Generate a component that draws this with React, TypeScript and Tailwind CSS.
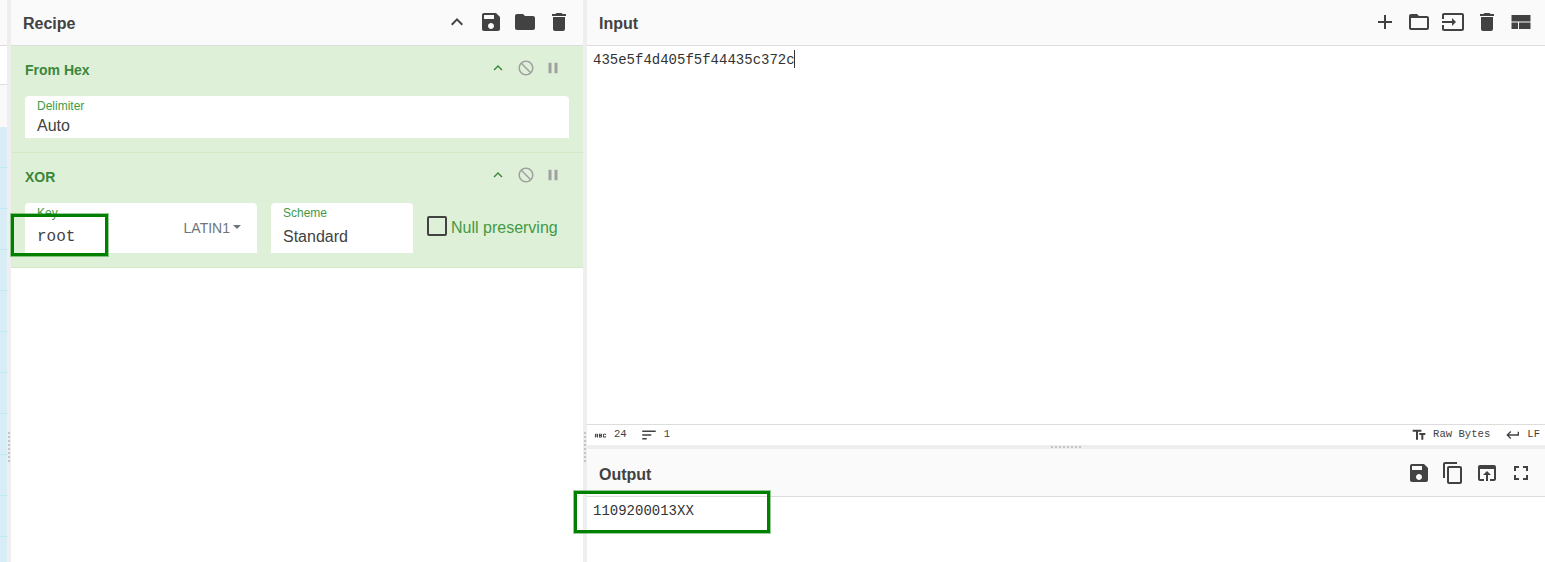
import type { ReactNode } from "react";

const icons = {
  up: "M7.41 15.41L12 10.83l4.59 4.58L18 14l-6-6-6 6z",
  save: "M17 3H5c-1.11 0-2 .9-2 2v14c0 1.1.89 2 2 2h14c1.1 0 2-.9 2-2V7l-4-4zm-5 16c-1.66 0-3-1.34-3-3s1.34-3 3-3 3 1.34 3 3-1.34 3-3 3zm3-10H5V5h10v4z",
  folder: "M10 4H4c-1.1 0-1.99.9-1.99 2L2 18c0 1.1.9 2 2 2h16c1.1 0 2-.9 2-2V8c0-1.1-.9-2-2-2h-8l-2-2z",
  trash: "M6 19c0 1.1.9 2 2 2h8c1.1 0 2-.9 2-2V7H6v12zM19 4h-3.5l-1-1h-5l-1 1H5v2h14V4z",
  block: "M12 2C6.48 2 2 6.48 2 12s4.48 10 10 10 10-4.48 10-10S17.52 2 12 2zM4 12c0-4.42 3.58-8 8-8 1.85 0 3.55.63 4.9 1.69L5.69 16.9C4.63 15.55 4 13.85 4 12zm8 8c-1.85 0-3.55-.63-4.9-1.69L18.31 7.1C19.37 8.45 20 10.15 20 12c0 4.42-3.58 8-8 8z",
  pause: "M6 19h4V5H6v14zm8-14v14h4V5h-4z",
  add: "M19 13h-6v6h-2v-6H5v-2h6V5h2v6h6v2z",
  folderOpen: "M20 6h-8l-2-2H4c-1.1 0-1.99.9-1.99 2L2 18c0 1.1.9 2 2 2h16c1.1 0 2-.9 2-2V8c0-1.1-.9-2-2-2zm0 12H4V8h16v10z",
  input: "M21 3.01H3c-1.1 0-2 .9-2 2V9h2V4.99h18v14.03H3V15H1v4.01c0 1.1.9 1.98 2 1.98h18c1.1 0 2-.88 2-1.98v-14c0-1.11-.9-2-2-2zM11 16l4-4-4-4v3H1v2h10v3z",
  layout: "M2.5 5h19v6.5h-19zM2.5 12.5H9V19H2.5zM10 12.5h11.5V19H10z",
  copy: "M16 1H4c-1.1 0-2 .9-2 2v14h2V3h12V1zm3 4H8c-1.1 0-2 .9-2 2v14c0 1.1.9 2 2 2h11c1.1 0 2-.9 2-2V7c0-1.1-.9-2-2-2zm0 16H8V7h11v14z",
  openBrowser: "M19 4H5c-1.11 0-2 .9-2 2v12c0 1.1.89 2 2 2h4v-2H5V8h14v10h-4v2h4c1.1 0 2-.9 2-2V6c0-1.1-.89-2-2-2zm-7 6l-4 4h3v6h2v-6h3l-4-4z",
  fullscreen: "M7 14H5v5h5v-2H7v-3zm-2-4h2V7h3V5H5v5zm12 7h-3v2h5v-5h-2v3zM14 5v2h3v3h2V5h-5z",
  textFields: "M2.5 4v3h5v12h3V7h5V4h-13zm19 5h-9v3h3v7h3v-7h3V9z",
  enter: "M19 7v4H5.83l3.58-3.59L8 6l-6 6 6 6 1.41-1.41L5.83 13H21V7z",
  sort: "M3 18h6v-2H3v2zM3 6v2h18V6H3zm0 7h12v-2H3v2z",
  abc: "M21 11h-1.5v-.5h-2v3h2V13H21v1c0 .55-.45 1-1 1h-3c-.55 0-1-.45-1-1v-4c0-.55.45-1 1-1h3c.55 0 1 .45 1 1v1zM8 10v5H6.5v-1.5h-2V15H3v-5c0-.55.45-1 1-1h3c.55 0 1 .45 1 1zm-1.5.5h-2V12h2v-1.5zm7 1.5c.55 0 1 .45 1 1v1c0 .55-.45 1-1 1h-4V9h4c.55 0 1 .45 1 1v1c0 .55-.45 1-1 1zM11 10.5v.75h2v-.75h-2zm2 2.25h-2v.75h2v-.75z",
};

function Icon({ d, className }: { d: string; className: string }) {
  return (
    <svg viewBox="0 0 24 24" fill="currentColor" className={className}>
      <path d={d} />
    </svg>
  );
}

function PanelHeader({ title, height, titleClass, children }: { title: string; height: string; titleClass: string; children: ReactNode }) {
  return (
    <div className={`flex items-center justify-between bg-[#fafafa] border-b border-[#dddddd] pl-3 ${height}`}>
      <span className={`text-[16px] font-bold text-[#424242] ${titleClass}`}>{title}</span>
      {children}
    </div>
  );
}

function OpControls() {
  return (
    <div className="flex items-center mr-[21px] -mt-[7px] text-[#a0a0a0]">
      <Icon d={icons.up} className="w-[18px] h-[18px] text-[#3a873a] mr-[10px]" />
      <Icon d={icons.block} className="w-[18px] h-[18px] -scale-x-100 mr-[9px]" />
      <Icon d={icons.pause} className="w-[18px] h-[18px]" />
    </div>
  );
}

function LeftStrip() {
  const rows = [0, 1, 2, 3, 4, 5, 6, 7, 8, 9, 10];
  return (
    <div className="w-[7px] h-full shrink-0 flex flex-col overflow-hidden">
      <div className="h-[46px] shrink-0 bg-[#fafafa] border-b border-[#dddddd]" />
      <div className="h-[39px] shrink-0 bg-white border-b border-[#dddddd]" />
      <div className="h-[42px] shrink-0 bg-[#f9f9f9]" />
      {rows.map((r) => (
        <div key={r} className="h-[41px] shrink-0 bg-[#d9edf7] border-b border-[#bce8f1]" />
      ))}
    </div>
  );
}

function Gutter({ className }: { className: string }) {
  return (
    <div className="relative w-[4px] h-full shrink-0 bg-[#eeeeee]">
      <div className={`absolute left-[1px] top-[432px] h-[30px] border-l-2 border-dotted border-[#c4c4c4] ${className}`} />
    </div>
  );
}

function Recipe() {
  return (
    <div className="flex-1 h-full flex flex-col bg-white">
      <PanelHeader title="Recipe" height="h-[46px]" titleClass="pt-[2px]">
        <div className="flex items-center gap-[2px] mr-[12px] -mt-[2px] text-[#424242]">
          <Icon d={icons.up} className="w-[24px] h-[24px] mr-[8px]" />
          <Icon d={icons.save} className="w-[24px] h-[24px] mr-[8px]" />
          <Icon d={icons.folder} className="w-[24px] h-[24px] mr-[8px]" />
          <Icon d={icons.trash} className="w-[24px] h-[24px]" />
        </div>
      </PanelHeader>

      <div className="h-[107px] bg-[#dff0d8] border-b border-[#d6e9c6] px-[14px] text-[#3a873a]">
        <div className="h-[50px] flex items-center justify-between">
          <span className="text-[14px] font-bold -mt-[2px]">From Hex</span>
          <div className="-mr-[14px]"><OpControls /></div>
        </div>
        <div className="h-[42px] bg-white rounded-t-[4px] px-[12px] pt-[3px]">
          <div className="text-[12px] leading-[14px] text-[#3f9a45]">Delimiter</div>
          <div className="text-[16px] leading-[24px] mt-[1px] text-[#424242]">Auto</div>
        </div>
      </div>

      <div className="h-[115px] bg-[#dff0d8] border-b border-[#d6e9c6] px-[14px] text-[#3a873a]">
        <div className="h-[50px] flex items-center justify-between">
          <span className="text-[14px] font-bold -mt-[2px]">XOR</span>
          <div className="-mr-[14px]"><OpControls /></div>
        </div>
        <div className="flex">
          <div className="relative w-[232px] h-[50px] bg-white rounded-t-[4px] px-[12px] pt-[3px]">
            <div className="text-[12px] leading-[14px] text-[#3f9a45]">Key</div>
            <div className="font-['Liberation_Mono',monospace] text-[16px] leading-[24px] mt-[5px] text-[#424242]">root</div>
            <div className="absolute right-[16px] top-[17px] flex items-center text-[14px] leading-[16px] text-[#6c757d]">
              LATIN1
              <span className="ml-[3px] mb-[3px] border-x-[4px] border-x-transparent border-t-[4px] border-t-[#6c757d]" />
            </div>
          </div>
          <div className="w-[142px] h-[50px] ml-[14px] bg-white rounded-t-[4px] px-[12px] pt-[3px]">
            <div className="text-[12px] leading-[14px] text-[#3f9a45]">Scheme</div>
            <div className="text-[16px] leading-[24px] mt-[5px] text-[#424242]">Standard</div>
          </div>
          <div className="flex items-start ml-[14px] pt-[13px]">
            <span className="w-[20px] h-[20px] border-2 border-[#424242] rounded-[2px]" />
            <span className="text-[16px] leading-[22px] mt-[1px] ml-[4px] text-[#3f9a45]">Null preserving</span>
          </div>
        </div>
      </div>
    </div>
  );
}

function Io() {
  return (
    <div className="w-[958px] h-full shrink-0 flex flex-col bg-white">
      <PanelHeader title="Input" height="h-[46px]" titleClass="pt-[2px]">
        <div className="flex items-center mr-[12px] -mt-[2px] text-[#424242]">
          <Icon d={icons.add} className="w-[24px] h-[24px] mr-[10px]" />
          <Icon d={icons.folderOpen} className="w-[24px] h-[24px] mr-[10px]" />
          <Icon d={icons.input} className="w-[24px] h-[24px] mr-[10px]" />
          <Icon d={icons.trash} className="w-[24px] h-[24px] mr-[10px]" />
          <Icon d={icons.layout} className="w-[24px] h-[24px]" />
        </div>
      </PanelHeader>

      <div className="h-[378px] pl-[6px] pt-[4px] font-['Liberation_Mono',monospace] text-[14px] leading-[18px] text-[#333333]">
        <span className="inline-block relative top-[1px]">435e5f4d405f5f44435c372c</span>
        <span className="inline-block align-top w-px h-[18px] -ml-[1px] bg-[#333333]" />
      </div>

      <div className="h-[21px] flex items-center justify-between bg-white border-t border-[#dddddd] px-[6px] font-['Liberation_Mono',monospace] text-[10.6px] text-[#424242]">
        <div className="flex items-center">
          <Icon d={icons.abc} className="w-[15px] h-[15px]" />
          <span className="ml-[6px] -mt-[1px]">24</span>
          <Icon d={icons.sort} className="w-[18px] h-[18px] ml-[13px]" />
          <span className="ml-[6px] -mt-[1px]">1</span>
        </div>
        <div className="flex items-center">
          <Icon d={icons.textFields} className="w-[16px] h-[16px]" />
          <span className="ml-[6px] -mt-[1px]">Raw Bytes</span>
          <Icon d={icons.enter} className="w-[16px] h-[16px] ml-[15px]" />
          <span className="ml-[6px] mr-[-1px]">LF</span>
        </div>
      </div>

      <div className="relative h-[4px] bg-[#eeeeee]">
        <div className="absolute left-[464px] top-[1px] w-[30px] border-t-2 border-dotted border-[#c4c4c4]" />
      </div>

      <PanelHeader title="Output" height="h-[48px]" titleClass="pt-[4px]">
        <div className="flex items-center mr-[12px] pt-[1px] text-[#424242]">
          <Icon d={icons.save} className="w-[24px] h-[24px] mr-[10px]" />
          <Icon d={icons.copy} className="w-[24px] h-[24px] mr-[10px]" />
          <Icon d={icons.openBrowser} className="w-[24px] h-[24px] mr-[10px]" />
          <Icon d={icons.fullscreen} className="w-[24px] h-[24px]" />
        </div>
      </PanelHeader>

      <div className="flex-1 pl-[6px] pt-[5px] font-['Liberation_Mono',monospace] text-[14px] leading-[18px] text-[#333333]">
        1109200013XX
      </div>
    </div>
  );
}

export default function App() {
  return (
    <div className="relative flex w-[1545px] h-[562px] overflow-hidden bg-white font-['Liberation_Sans',Arial,sans-serif]">
      <LeftStrip />
      <Gutter className="" />
      <Recipe />
      <Gutter className="-left-[1px]" />
      <Io />
      {/* annotation boxes drawn on top of the screenshot */}
      <div className="absolute left-[11px] top-[214px] w-[97px] h-[42px] border-[3px] border-[#008000] ring-1 ring-[#008000]/40" />
      <div className="absolute left-[574px] top-[491px] w-[196px] h-[42px] border-[3px] border-[#008000] ring-1 ring-[#008000]/40" />
    </div>
  );
}
